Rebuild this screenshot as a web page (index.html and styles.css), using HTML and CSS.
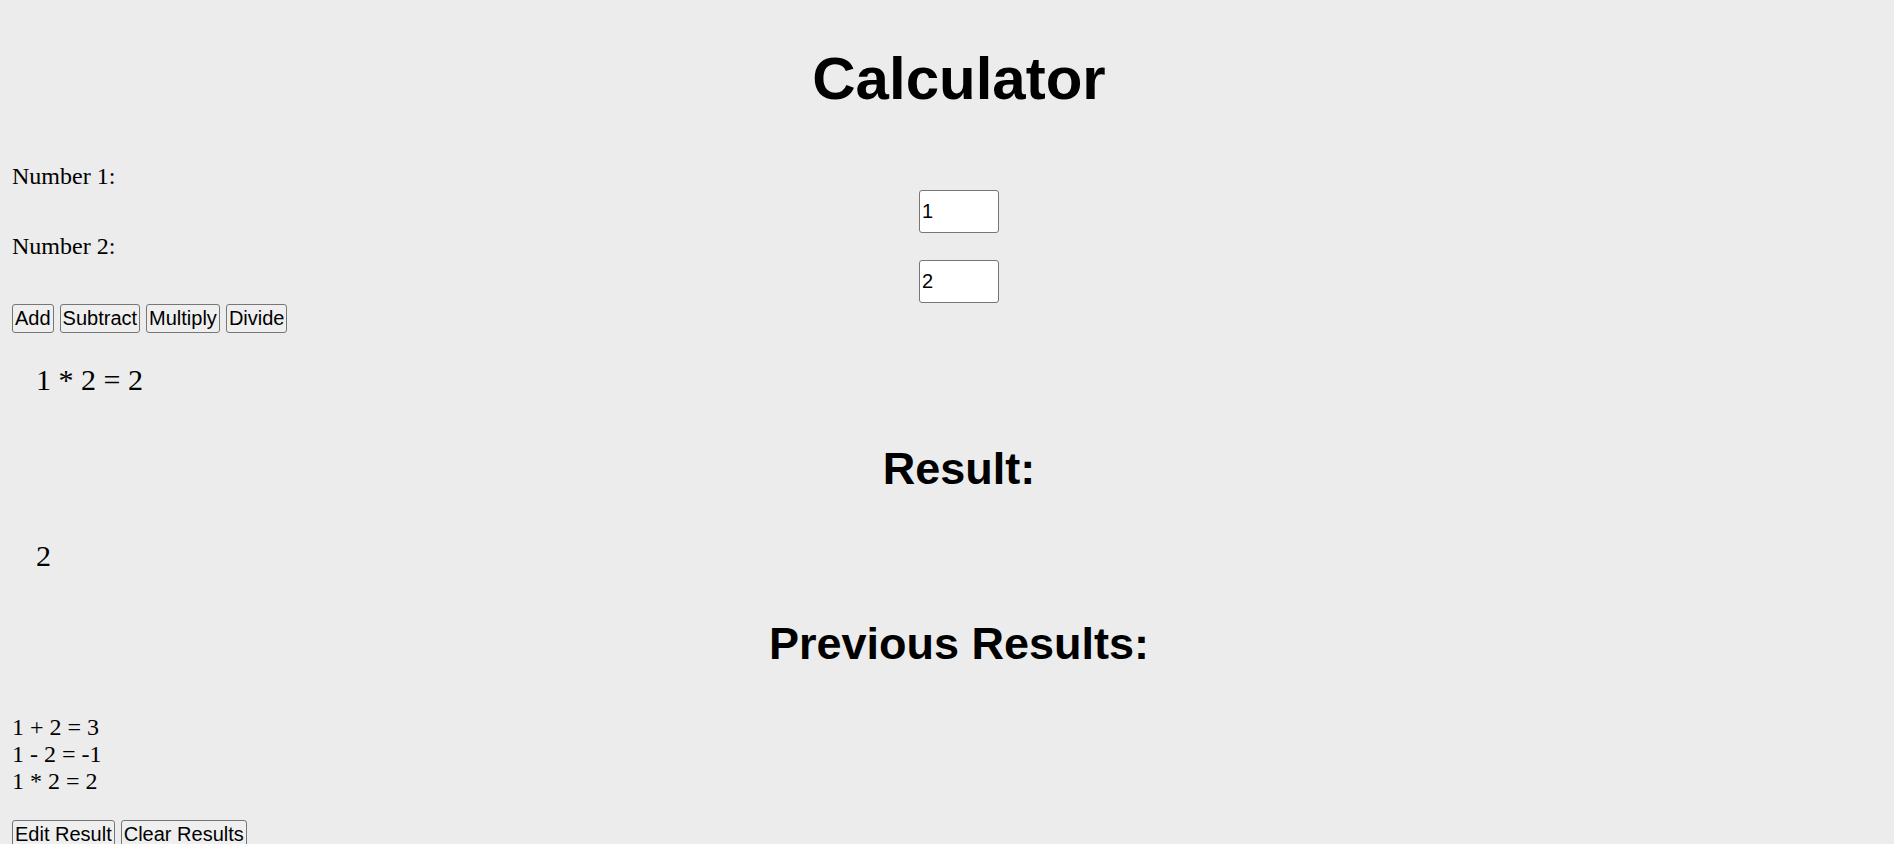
FILE: index.html
```html
<!DOCTYPE html>
<html lang="en">
<head>
<meta charset="utf-8">
<title>Calculator</title>
<link rel="stylesheet" href="styles.css">
</head>
<body>
  <h1 class="title center">Calculator</h1>
  <div class="form">
    <label class="field-label" for="num1">Number 1:</label>
    <input class="num-input" id="num1" type="text" value="1">
    <label class="field-label" for="num2">Number 2:</label>
    <input class="num-input" id="num2" type="text" value="2">
  </div>
  <div class="ops">
    <button class="btn">Add</button>
    <button class="btn">Subtract</button>
    <button class="btn">Multiply</button>
    <button class="btn">Divide</button>
  </div>
  <p class="expr">1 * 2 = 2</p>
  <h2 class="section-title center result-title">Result:</h2>
  <p class="result-value">2</p>
  <h2 class="section-title center prev-title">Previous Results:</h2>
  <div class="history">
    <div class="history-item">1 + 2 = 3</div>
    <div class="history-item">1 - 2 = -1</div>
    <div class="history-item">1 * 2 = 2</div>
  </div>
  <div class="ops bottom-ops">
    <button class="btn">Edit Result</button>
    <button class="btn">Clear Results</button>
  </div>
</body>
</html>
```
FILE: styles.css
```css
html {
  background: #ececec;
}
body {
  margin: 0;
  padding: 12px;
  background: #ececec;
  color: #000;
  font-family: "Liberation Serif", "Times New Roman", serif;
  font-size: 24px;
  line-height: 27.6px;
}
.center {
  text-align: center;
  padding-left: 24px;
}
.title {
  font-family: "Liberation Sans", Arial, sans-serif;
  font-weight: bold;
  font-size: 60px;
  line-height: 69px;
  margin: 32px 0 50px;
}
.form {
  display: flex;
  flex-direction: column;
}
.field-label {
  display: block;
  height: 27px;
}
.num-input {
  align-self: center;
  margin-left: 24px;
  box-sizing: border-box;
  width: 80px;
  height: 43px;
  padding: 1px 2px;
  border: 1px solid #767676;
  border-radius: 3px;
  background: #fff;
  font-family: "Liberation Sans", Arial, sans-serif;
  font-size: 20px;
  color: #000;
}
.ops {
  display: flex;
  gap: 6px;
  margin-top: 1px;
}
.btn {
  font-family: "Liberation Sans", Arial, sans-serif;
  font-size: 20px;
  line-height: 23px;
  padding: 2px 2px;
  border: 1px solid #767676;
  border-radius: 3px;
  background: #efefef;
  color: #000;
}
.expr {
  font-size: 30px;
  line-height: 34.5px;
  margin: 30px 0 0 24px;
}
.section-title {
  font-family: "Liberation Sans", Arial, sans-serif;
  font-weight: bold;
  font-size: 45px;
  line-height: 52px;
}
.result-title {
  margin: 45px 0 0;
}
.result-value {
  font-size: 30px;
  line-height: 34.5px;
  margin: 44px 0 0 24px;
}
.prev-title {
  margin: 45px 0 0;
}
.history {
  margin-top: 44px;
}
.history-item {
  line-height: 27px;
}
.bottom-ops {
  margin-top: 25px;
}
```
